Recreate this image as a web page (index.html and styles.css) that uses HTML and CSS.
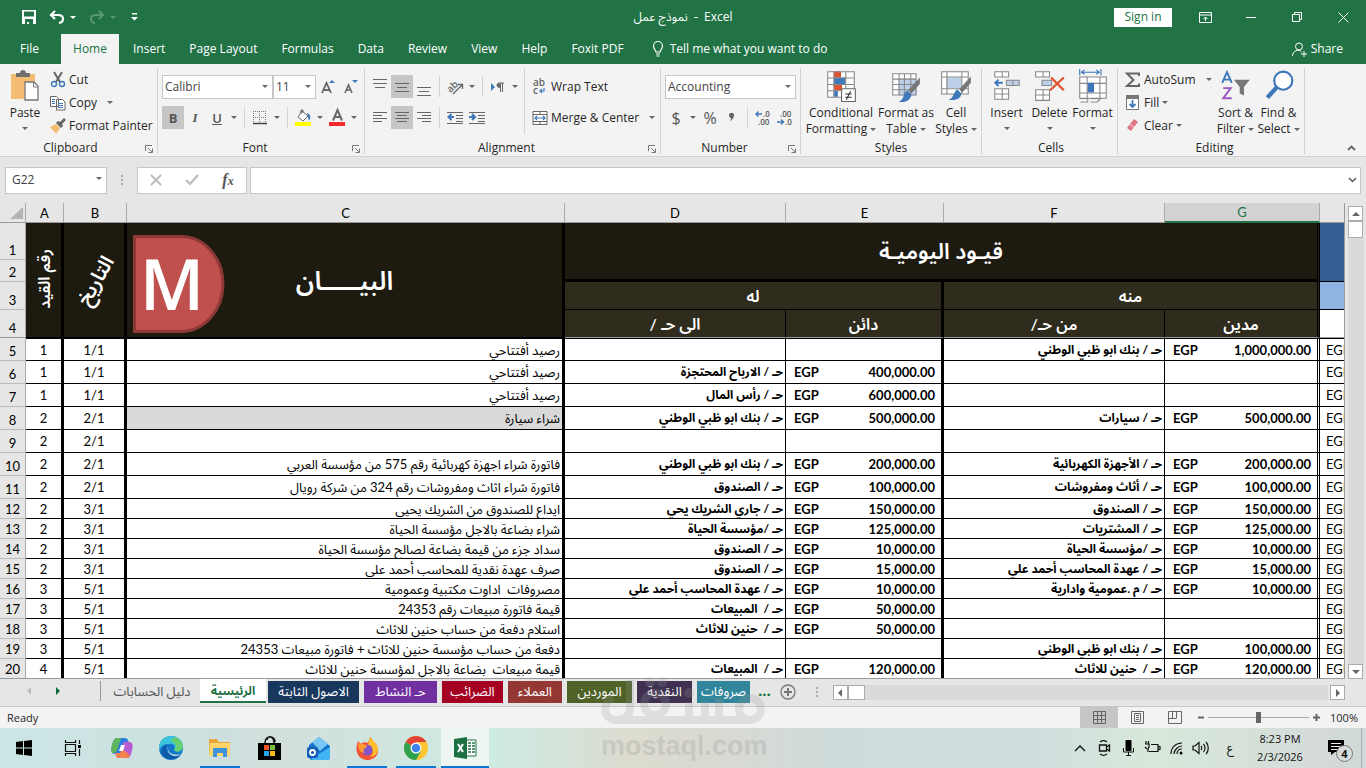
FILE: index.html
```html
<!DOCTYPE html>
<html lang="en">
<head>
<meta charset="utf-8">
<title>نموذج عمل - Excel</title>
<meta name="viewport" content="width=device-width, initial-scale=1">
<link rel="stylesheet" href="styles.css">
</head>
<body>
<header class="titlebar">
  <div class="quick">
    <button class="qbtn" aria-label="Save"><svg width="14" height="14" viewBox="0 0 14 14"><path d="M0 0h14v14H0zM2 1.500v5h10v-5zM3 9v5h2v-2h2v2h4V9z" fill="#fff" fill-rule="evenodd"/></svg></button>
    <button class="qbtn" aria-label="Undo"><svg width="16" height="14" viewBox="0 0 16 14"><path d="M1 5h8c7 0 6 7 1 8M6 1L2 5l4 4" fill="none" stroke="#fff" stroke-width="2.200"/></svg><span class="caret light"></span></button>
    <button class="qbtn dim" aria-label="Redo"><svg width="16" height="14" viewBox="0 0 16 14"><path d="M15 5H7C0 5 1 12 6 13M10 1l4 4-4 4" fill="none" stroke="#fff" stroke-width="2"/></svg><span class="caret light"></span></button>
    <button class="qbtn" aria-label="Customize toolbar"><svg width="7" height="8" viewBox="0 0 7 8"><path d="M1 0h5v1.500H1zM0 4h7L3.500 7.500z" fill="#fff"/></svg></button>
  </div>
  <h1 class="title"><span dir="rtl">نموذج عمل</span>&nbsp; - &nbsp;Excel</h1>
  <div class="winctl">
    <button class="signin">Sign in</button>
    <button class="wbtn" aria-label="Ribbon options"><svg width="13" height="11" viewBox="0 0 13 11"><path d="M.5.5h12v10H.5zM.5 3h12M6.500 9V5M4.500 7l2-2 2 2" fill="none" stroke="#fff"/></svg></button>
    <button class="wbtn" aria-label="Minimize"><svg width="11" height="11"><path d="M0 5.500h10" stroke="#fff"/></svg></button>
    <button class="wbtn" aria-label="Restore"><svg width="11" height="11"><path d="M.5 2.500h7v7h-7zM2.500 2.500v-2h7v7h-2" fill="none" stroke="#fff"/></svg></button>
    <button class="wbtn" aria-label="Close"><svg width="11" height="11"><path d="M.5.5l10 10M10.500.5l-10 10" stroke="#fff"/></svg></button>
  </div>
</header>
<nav class="tabs">
  <a href="#" class="file">File</a><a href="#" class="on">Home</a><a href="#">Insert</a><a href="#">Page Layout</a><a href="#">Formulas</a><a href="#">Data</a><a href="#">Review</a><a href="#">View</a><a href="#">Help</a><a href="#">Foxit PDF</a>
  <a href="#" class="tell"><svg width="12" height="16" viewBox="0 0 12 16"><path d="M4 11C4 9 1.500 8 1.500 5a4.500 4.500 0 0 1 9 0c0 3-2.500 4-2.500 6zM4 13h4M4.500 15h3" fill="none" stroke="#fff" stroke-width="1.200"/></svg>Tell me what you want to do</a>
  <a href="#" class="share"><svg width="15" height="15" viewBox="0 0 15 15"><circle cx="7" cy="4.500" r="3.500" fill="none" stroke="#fff"/><path d="M.5 14c0-6 7-7 9-4M9 12h6M12 9v6" fill="none" stroke="#fff"/></svg>Share</a>
</nav>
<section class="ribbon">
  <div class="group g-clip">
    <div class="body">
      <button class="big paste"><svg width="30" height="34" viewBox="0 0 30 32"><path d="M1 4h24v25H1z" fill="#f3bd74"/><path d="M6 7h14V3h-4c0-4-6-4-6 0H6z" fill="#707070"/><path d="M15 12h9l4 4v14H15z" fill="#fff" stroke="#777" stroke-width="1.300"/><path d="M23.500 12v5H28" fill="none" stroke="#777"/></svg><span>Paste</span><i class="caret"></i></button>
      <div class="stack">
        <button class="item"><svg width="16" height="16" viewBox="0 0 16 16"><path d="M4 0l6 10M12 0L6 10" stroke="#666" stroke-width="2"/><circle cx="4" cy="12" r="2.500" fill="none" stroke="#3e78ba" stroke-width="1.400"/><circle cx="12" cy="12" r="2.500" fill="none" stroke="#3e78ba" stroke-width="1.400"/></svg>Cut</button>
        <button class="item"><svg width="16" height="16" viewBox="0 0 16 16"><path d="M.5 1.500h6l2 2v8h-8zM6.500 4.500h6l2.500 2.500v8H6.500z" fill="#fff" stroke="#666"/><path d="M2 4.500h3M2 6.500h3M2 8.500h3M8 8.500h5M8 10.500h5M8 12.500h5" stroke="#3e78ba"/></svg>Copy<i class="caret far"></i></button>
        <button class="item"><svg width="16" height="16" viewBox="0 0 16 16"><path d="M0 9l6-3 4 4-4 6C4 13 2 12 0 9z" fill="#f3bd74"/><path d="M6 5l5 5 2-2-1-2 4-4-2-2-4 4-2-1z" fill="#666"/></svg>Format Painter</button>
      </div>
    </div>
    <div class="cap"><span>Clipboard</span><svg class="launch" width="8" height="8"><path d="M.5 6V.5H7M3 3l4 4M7.500 3.500v4h-4" fill="none" stroke="#777"/></svg></div>
  </div>
  <div class="group g-font">
    <div class="body rows">
      <div class="row">
        <label class="sel name"><select aria-label="Font"><option>Calibri</option></select></label><label class="sel size"><select aria-label="Font size"><option>11</option></select></label>
        <button class="ib wide" aria-label="Increase font size"><svg width="14" height="16" viewBox="0 0 14 16"><path d="M1 14L5.500 4 10 14M2.500 11h6" fill="none" stroke="#666" stroke-width="1.800"/><path d="M8 4h6L11 1z" fill="#3e78ba"/></svg></button>
        <button class="ib" aria-label="Decrease font size"><svg width="14" height="16" viewBox="0 0 14 16"><path d="M1 14l3.500-8L8 14M2 11h5" fill="none" stroke="#666" stroke-width="1.600"/><path d="M8 1h6l-3 3z" fill="#3e78ba"/></svg></button>
      </div>
      <div class="row">
        <button class="ib on bold">B</button><button class="ib ital">I</button><button class="ib under">U</button><i class="caret b"></i><i class="vs"></i>
        <button class="ib" aria-label="Borders"><svg width="14" height="14"><path d="M.5 0v13M6.500 0v13M12.500 0v13M0 .5h13M0 6.500h13" stroke="#777" stroke-dasharray="1 1"/><path d="M0 12.500h14" stroke="#444" stroke-width="1.500"/></svg></button><i class="caret b"></i><i class="vs"></i>
        <button class="ib" aria-label="Fill color"><svg width="17" height="17" viewBox="0 0 17 17"><path d="M7 2l6 5-5 5-5-4zM6 5V1h2v3" fill="#fff" stroke="#666"/><path d="M12 4c4 1 4 5 2 8-1-3-1-5-2-8" fill="#3e78ba"/><path d="M0 13h16v4H0z" fill="#ff0"/></svg></button><i class="caret b"></i>
        <button class="ib" aria-label="Font color"><svg width="17" height="17" viewBox="0 0 17 17"><path d="M4 11.500L8.500 1 13 11.500M5.500 8h6" fill="none" stroke="#666" stroke-width="2"/><path d="M0 13h16v4H0z" fill="#f2282c"/></svg></button><i class="caret b"></i>
      </div>
    </div>
    <div class="cap"><span>Font</span><svg class="launch" width="8" height="8"><path d="M.5 6V.5H7M3 3l4 4M7.500 3.500v4h-4" fill="none" stroke="#777"/></svg></div>
  </div>
  <div class="group g-align">
    <div class="body">
      <div class="rows aligns">
        <div class="row">
          <button class="ib" aria-label="Top align"><svg width="14" height="18"><path d="M0 5.500h14M2 9.500h10M0 1.500h14" stroke="#666"/></svg></button><button class="ib on" aria-label="Middle align"><svg width="14" height="18"><path d="M0 5.500h14M2 9.500h10M0 13.500h14" stroke="#666"/></svg></button><button class="ib" aria-label="Bottom align"><svg width="14" height="18"><path d="M0 9.500h14M2 13.500h10M0 17.500h14" stroke="#666"/></svg></button><i class="vs"></i>
          <button class="ib" aria-label="Orientation"><svg width="17" height="16" viewBox="0 0 17 16"><text class="ori" x="0" y="10" transform="rotate(-45 7 8)">ab</text><path d="M6 15L15 6M11 5.500h4.500V10" fill="none" stroke="#666" stroke-width="1.300"/></svg></button><i class="caret b"></i><i class="vs"></i>
          <button class="ib" aria-label="Text direction"><svg width="14" height="10"><path d="M0 1l4 4-4 4z" fill="#3e78ba"/><path d="M10 5.500C5 6 5 1 8 1h5M9.500 1v9M11.500 1v9" fill="none" stroke="#666"/><circle cx="8" cy="3.500" r="2" fill="#666"/></svg></button><i class="caret b"></i>
        </div>
        <div class="row">
          <button class="ib" aria-label="Align left"><svg width="14" height="14"><path d="M0 1.500h14M0 4.500h9M0 7.500h14M0 10.500h9" stroke="#666"/></svg></button><button class="ib on" aria-label="Center"><svg width="14" height="14"><path d="M0 1.500h14M2 4.500h10M0 7.500h14M2 10.500h10" stroke="#666"/></svg></button><button class="ib" aria-label="Align right"><svg width="14" height="14"><path d="M0 1.500h14M5 4.500h9M0 7.500h14M5 10.500h9" stroke="#666"/></svg></button><i class="vs"></i>
          <button class="ib" aria-label="Decrease indent"><svg width="16" height="14"><path d="M0 1.500h16M9 4.500h7M9 7.500h7M0 12.500h16M9 10.500h7" stroke="#666"/><path d="M7 6H2M4.500 3L1.500 6l3 3" fill="none" stroke="#3e78ba" stroke-width="2"/></svg></button><button class="ib" aria-label="Increase indent"><svg width="16" height="14"><path d="M0 1.500h16M9 4.500h7M9 7.500h7M0 12.500h16M9 10.500h7" stroke="#666"/><path d="M0 6h5M3 3l3 3-3 3" fill="none" stroke="#3e78ba" stroke-width="2"/></svg></button>
        </div>
      </div>
      <div class="rows wraps">
        <div class="row"><button class="item"><svg width="16" height="16" viewBox="0 0 16 16"><text class="abc" x="1" y="7">ab</text><text class="abc" x="1" y="15">c</text><path d="M12 9v3H8M10 10l-2 2 2 2" fill="none" stroke="#3e78ba" stroke-width="1.200"/></svg>Wrap Text</button></div>
        <div class="row"><button class="item"><svg width="16" height="16"><path d="M1 1.500h14v13H1zM1 4.500h14M1 11.500h14M8 1v3M8 12v3" fill="#fff" stroke="#666"/><path d="M3 8h10M5 6L3 8l2 2M11 6l2 2-2 2" fill="none" stroke="#3e78ba" stroke-width="1.200"/></svg>Merge &amp; Center<i class="caret far"></i></button></div>
      </div>
    </div>
    <div class="cap"><span>Alignment</span><svg class="launch" width="8" height="8"><path d="M.5 6V.5H7M3 3l4 4M7.500 3.500v4h-4" fill="none" stroke="#777"/></svg></div>
  </div>
  <div class="group g-num">
    <div class="body rows">
      <div class="row"><label class="sel fmt"><select aria-label="Number format"><option>Accounting</option></select></label></div>
      <div class="row"><button class="ib sym">$</button><i class="caret b"></i><button class="ib sym">%</button><button class="ib" aria-label="Comma style"><svg width="6" height="9"><path d="M0 2c0-3 6-3 5 1-1 3-2 4-4 5 1-2 1-2 1-3C1 5 0 4 0 2" fill="#666"/></svg></button><i class="vs"></i>
      <button class="ib" aria-label="Increase decimal"><svg width="16" height="16" viewBox="0 0 16 16"><text class="dec" x="8" y="7">.0</text><text class="dec" x="3" y="15">.00</text><path d="M7 4H1M3.500 1.500L1 4l2.500 2.500" fill="none" stroke="#3e78ba" stroke-width="1.400"/></svg></button><button class="ib" aria-label="Decrease decimal"><svg width="16" height="16" viewBox="0 0 16 16"><text class="dec" x="3" y="7">.00</text><text class="dec" x="8" y="15">.0</text><path d="M0 12h6M4 9.500L6.500 12 4 14.500" fill="none" stroke="#3e78ba" stroke-width="1.400"/></svg></button></div>
    </div>
    <div class="cap"><span>Number</span><svg class="launch" width="8" height="8"><path d="M.5 6V.5H7M3 3l4 4M7.500 3.500v4h-4" fill="none" stroke="#777"/></svg></div>
  </div>
  <div class="group g-styles">
    <div class="body">
      <button class="big cf"><svg width="30" height="34" viewBox="0 0 28 32"><path d="M1 2h25v24H1z" fill="#fff"/><path d="M7 2h7v6H7zM7 14h8v6H7z" fill="#e0532f"/><path d="M7 8h11v6H7zM7 20h4v6H7z" fill="#3e78ba"/><path d="M1.500 2.500h25v24h-25zM7.500 2v24M18.500 2v24M1 8.500h25M1 14.500h25M1 20.500h25" fill="none" stroke="#888"/><path d="M14.500 18.500h13v12h-13z" fill="#fff" stroke="#666"/><path d="M18 23.500h6M18 26.500h6M23 21l-4 8" stroke="#333"/></svg><span>Conditional</span><span>Formatting <i class="caret"></i></span></button>
      <button class="big w50"><svg width="30" height="34" viewBox="0 0 28 32"><path d="M1.500 4.500h22v20h-22z" fill="#fff"/><path d="M7 9h17v16H7z" fill="#bcd0ea"/><path d="M1.500 4.500h22v20h-22zM7.500 4v20M12.500 4v20M18.500 4v20M1 9.500h22M1 14.500h22M1 19.500h22" fill="none" stroke="#888"/><path d="M27 8v6l-8 9-3-3z" fill="#777"/><path d="M15 20l4 4c0 4-4 8-12 7 5-2 4-7 8-11" fill="#3e78ba"/></svg><span>Format as</span><span>Table <i class="caret"></i></span></button>
      <button class="big w50"><svg width="30" height="34" viewBox="0 0 28 32"><path d="M.5 2.500h25v21H.500z" fill="#fff"/><path d="M5 8h14v10H5z" fill="#bcd0ea"/><path d="M.5 2.500h25v21H.500zM5.500 2v21M19.500 2v21M0 7.500h25M0 18.500h25" fill="none" stroke="#888"/><path d="M28 7v6l-8 9-3-3z" fill="#777"/><path d="M15 19l4 4c0 4-4 7-12 6 5-2 4-6 8-10" fill="#3e78ba"/></svg><span>Cell</span><span>Styles <i class="caret"></i></span></button>
    </div>
    <div class="cap"><span>Styles</span></div>
  </div>
  <div class="group g-cells">
    <div class="body">
      <button class="big w42"><svg width="28" height="34" viewBox="0 0 26 32"><path d="M1.500 2.500h13v5h-13zM8.500 2v5M1.500 18.500h13v10h-13zM8.500 18v10M1 23.500h14" fill="#fff" stroke="#888"/><path d="M12.500 10.500h12v5h-12zM18.500 10v5" fill="#bcd0ea" stroke="#888"/><path d="M9 13H3M5 10l-3 3 3 3" fill="none" stroke="#3e78ba" stroke-width="1.800"/></svg><span>Insert</span><i class="caret"></i></button>
      <button class="big w42"><svg width="32" height="34" viewBox="0 0 30 32"><path d="M1.500 2.500h13v5h-13zM8.500 2v5M1.500 19.500h13v10h-13zM8.500 19v10M1 24.500h14" fill="#fff" stroke="#888"/><path d="M7.500 10.500h9v5h-9z" fill="#bcd0ea" stroke="#888"/><path d="M16 8l12 12M28 8L15 20" stroke="#e0532f" stroke-width="2.200"/></svg><span>Delete</span><i class="caret"></i></button>
      <button class="big w42"><svg width="30" height="34" viewBox="0 0 28 32"><path d="M1.500 7.500h25v20h-25zM8.500 7v20M20.500 7v20M1 13.500h25M1 22.500h25M2 28h7v3H2M12 28h9l-3 3h-6" fill="#fff" stroke="#888"/><path d="M9 13h6v9H9z" fill="#3e78ba"/><path d="M1.500 0v6M21.500 0v6M3 3h17M6 1L3 3l3 2M17 1l3 2-3 2" fill="none" stroke="#3e78ba"/></svg><span>Format</span><i class="caret"></i></button>
    </div>
    <div class="cap"><span>Cells</span></div>
  </div>
  <div class="group g-edit">
    <div class="body">
      <div class="stack">
        <button class="item"><svg width="16" height="16" viewBox="0 0 16 16"><path d="M14 4V1.500H2L8.500 8 2 14h12v-2.500" fill="none" stroke="#666" stroke-width="2"/></svg>AutoSum<i class="caret far"></i></button>
        <button class="item"><svg width="16" height="16" viewBox="0 0 16 16"><path d="M1.500 1.500h12v13h-12z" fill="#fff" stroke="#777"/><path d="M1 0h13v4H1z" fill="#777"/><path d="M7.500 5v7M4.500 9l3 3 3-3" fill="none" stroke="#3e78ba" stroke-width="1.800"/></svg>Fill <i class="caret"></i></button>
        <button class="item"><svg width="16" height="16" viewBox="0 0 16 16"><path d="M9 1l4 3-4 5-4-3zM4.500 6.500l4 3L6 13l-4-3z" fill="#df7484"/></svg>Clear <i class="caret"></i></button>
      </div>
      <button class="big w42"><svg width="32" height="34" viewBox="0 0 30 32"><path d="M2 13L6.500 3 11 13M3.500 10h6" fill="none" stroke="#3e78ba" stroke-width="1.800"/><path d="M3 18h7L3 27.500h8" fill="none" stroke="#9a55c4" stroke-width="1.800"/><path d="M13 10h15l-5.500 7v8l-4-2v-6z" fill="#777"/></svg><span>Sort &amp;</span><span>Filter <i class="caret"></i></span></button>
      <button class="big w42"><svg width="30" height="34" viewBox="0 0 28 32"><circle cx="18" cy="11" r="8.500" fill="#fff" stroke="#3e78ba" stroke-width="2"/><path d="M12 17L3 27" stroke="#3e78ba" stroke-width="4"/></svg><span>Find &amp;</span><span>Select <i class="caret"></i></span></button>
    </div>
    <div class="cap"><span>Editing</span></div>
  </div>
  <button class="collapse" aria-label="Collapse ribbon"><svg width="9" height="6"><path d="M1 5l3.500-3.500L8 5" fill="none" stroke="#666" stroke-width="1.800"/></svg></button>
</section>
<section class="formula">
  <label class="sel cellname"><select aria-label="Name box"><option>G22</option></select></label>
  <span class="dots"></span>
  <div class="fbtns">
    <button aria-label="Cancel"><svg width="12" height="12"><path d="M1 1l10 10M11 1L1 11" stroke="#bbb" stroke-width="1.800"/></svg></button>
    <button aria-label="Enter"><svg width="14" height="12"><path d="M1 6l4 4 8-9" fill="none" stroke="#bbb" stroke-width="2.200"/></svg></button>
    <button class="fx" aria-label="Insert function">f<small>x</small></button>
  </div>
  <label class="fin"><input type="text" aria-label="Formula bar"><svg width="9" height="6"><path d="M1 1l3.500 3.500L8 1" fill="none" stroke="#555" stroke-width="1.500"/></svg></label>
</section>
<main class="sheet">
  <div class="gridwrap">
  <table class="grid">
    <colgroup><col class="c0"><col class="ca"><col class="cb"><col class="cc"><col class="cd"><col class="ce"><col class="cd"><col class="cg"><col class="ch"></colgroup>
    <thead><tr><th class="corner"><svg width="13" height="12"><path d="M13 0v12H0z" fill="#b3b3b3"/></svg></th><th>A</th><th>B</th><th>C</th><th>D</th><th>E</th><th>F</th><th class="cur">G</th><th></th></tr></thead>
    <tbody>
    <tr class="r1"><th>1</th><td class="dk k" rowspan="4"><span class="vert">رقم القيد</span></td><td class="dk k" rowspan="4"><span class="slant">التاريخ</span></td><td class="dk k bayan" rowspan="4"><svg class="logo" width="92" height="98" viewBox="0 0 92 98"><path d="M1.500 1.500H48a42 47.500 0 0 1 0 95H1.500z" fill="#c0504d" stroke="#8c3836" stroke-width="3"/><text x="39" y="75" text-anchor="middle">M</text></svg><span>البيـــــان</span></td><td class="dk t0 dbl" colspan="4" rowspan="2">قيـود اليوميـة</td><td class="blue" rowspan="2"></td></tr>
    <tr class="r2"><th>2</th></tr>
    <tr class="r3"><th>3</th><td class="md k" colspan="2">له</td><td class="md dbl" colspan="2">منه</td><td class="sky"></td></tr>
    <tr class="r3 r4"><th>4</th><td class="md">الى حـ /</td><td class="md k">دائن</td><td class="md">من حـ/</td><td class="md dbl">مدين</td><td></td></tr>
    <tr class="h first"><th>5</th><td>1</td><td>1/1</td><td>رصيد أفتتاحي</td><td></td><td></td><td>حـ / بنك ابو ظبي الوطني</td><td><div class="m"><span>EGP</span><span>1,000,000.00</span></div></td><td>EGP</td></tr>
    <tr class="h"><th>6</th><td>1</td><td>1/1</td><td>رصيد أفتتاحي</td><td>حـ / الارباح المحتجزة</td><td><div class="m"><span>EGP</span><span>400,000.00</span></div></td><td></td><td></td><td>EGP</td></tr>
    <tr class="h"><th>7</th><td>1</td><td>1/1</td><td>رصيد أفتتاحي</td><td>حـ / رأس المال</td><td><div class="m"><span>EGP</span><span>600,000.00</span></div></td><td></td><td></td><td>EGP</td></tr>
    <tr class="h"><th>8</th><td>2</td><td>2/1</td><td class="gray">شراء سيارة</td><td>حـ / بنك ابو ظبي الوطني</td><td><div class="m"><span>EGP</span><span>500,000.00</span></div></td><td>حـ / سيارات</td><td><div class="m"><span>EGP</span><span>500,000.00</span></div></td><td>EGP</td></tr>
    <tr class="h"><th>9</th><td>2</td><td>2/1</td><td></td><td></td><td></td><td></td><td></td><td>EGP</td></tr>
    <tr class="h"><th>10</th><td>2</td><td>2/1</td><td>فاتورة شراء اجهزة كهربائية رقم 575 من مؤسسة العربي</td><td>حـ / بنك ابو ظبي الوطني</td><td><div class="m"><span>EGP</span><span>200,000.00</span></div></td><td>حـ / الأجهزة الكهربائية</td><td><div class="m"><span>EGP</span><span>200,000.00</span></div></td><td>EGP</td></tr>
    <tr class="h"><th>11</th><td>2</td><td>2/1</td><td>فاتورة شراء اثاث ومفروشات رقم 324 من شركة رويال</td><td>حـ / الصندوق</td><td><div class="m"><span>EGP</span><span>100,000.00</span></div></td><td>حـ / أثاث ومفروشات</td><td><div class="m"><span>EGP</span><span>100,000.00</span></div></td><td>EGP</td></tr>
    <tr><th>12</th><td>2</td><td>3/1</td><td>ايداع للصندوق من الشريك يحيى</td><td>حـ / جاري الشريك يحي</td><td><div class="m"><span>EGP</span><span>150,000.00</span></div></td><td>حـ / الصندوق</td><td><div class="m"><span>EGP</span><span>150,000.00</span></div></td><td>EGP</td></tr>
    <tr><th>13</th><td>2</td><td>3/1</td><td>شراء بضاعة بالاجل مؤسسة الحياة</td><td>حـ /مؤسسة الحياة</td><td><div class="m"><span>EGP</span><span>125,000.00</span></div></td><td>حـ / المشتريات</td><td><div class="m"><span>EGP</span><span>125,000.00</span></div></td><td>EGP</td></tr>
    <tr><th>14</th><td>2</td><td>3/1</td><td>سداد جزء من قيمة بضاعة لصالح مؤسسة الحياة</td><td>حـ / الصندوق</td><td><div class="m"><span>EGP</span><span>10,000.00</span></div></td><td>حـ /مؤسسة الحياة</td><td><div class="m"><span>EGP</span><span>10,000.00</span></div></td><td>EGP</td></tr>
    <tr><th>15</th><td>2</td><td>3/1</td><td>صرف عهدة نقدية للمحاسب أحمد على</td><td>حـ / الصندوق</td><td><div class="m"><span>EGP</span><span>15,000.00</span></div></td><td>حـ / عهدة المحاسب أحمد علي</td><td><div class="m"><span>EGP</span><span>15,000.00</span></div></td><td>EGP</td></tr>
    <tr><th>16</th><td>3</td><td>5/1</td><td>مصروفات&nbsp; اداوت مكتبية وعمومية</td><td>حـ / عهدة المحاسب أحمد علي</td><td><div class="m"><span>EGP</span><span>10,000.00</span></div></td><td>حـ / م .عمومية وادارية</td><td><div class="m"><span>EGP</span><span>10,000.00</span></div></td><td>EGP</td></tr>
    <tr><th>17</th><td>3</td><td>5/1</td><td>قيمة فاتورة مبيعات رقم 24353</td><td>حـ /&nbsp; المبيعات</td><td><div class="m"><span>EGP</span><span>50,000.00</span></div></td><td></td><td></td><td>EGP</td></tr>
    <tr><th>18</th><td>3</td><td>5/1</td><td>استلام دفعة من حساب حنين للاثاث</td><td>حـ /&nbsp; حنين للاثاث</td><td><div class="m"><span>EGP</span><span>50,000.00</span></div></td><td></td><td></td><td>EGP</td></tr>
    <tr><th>19</th><td>3</td><td>5/1</td><td>دفعة من حساب مؤسسة حنين للاثاث + فاتورة مبيعات 24353</td><td></td><td></td><td>حـ / بنك ابو ظبي الوطني</td><td><div class="m"><span>EGP</span><span>100,000.00</span></div></td><td>EGP</td></tr>
    <tr><th>20</th><td>4</td><td>5/1</td><td>قيمة مبيعات&nbsp; بضاعة بالاجل لمؤسسة حنين للاثاث</td><td>حـ /&nbsp; المبيعات</td><td><div class="m"><span>EGP</span><span>120,000.00</span></div></td><td>حـ /&nbsp; حنين للاثاث</td><td><div class="m"><span>EGP</span><span>120,000.00</span></div></td><td>EGP</td></tr>
    </tbody>
  </table>
  </div>
  <div class="vscroll"><button aria-label="Scroll up"><i class="tri up"></i></button><span class="thumb"></span><span class="track"></span><button aria-label="Scroll down"><i class="tri down"></i></button></div>
</main>
<nav class="sheets">
  <div class="arrows"><button aria-label="Previous sheets"><i class="tri prev pale"></i></button><button aria-label="Next sheets"><i class="tri next green"></i></button></div>
  <a href="#" class="st plain">دليل الحسابات</a><a href="#" class="st active">الرئيسية</a><a href="#" class="st navy">الاصول الثابتة</a><a href="#" class="st purple">حـ النشاط</a><a href="#" class="st red">الضرائب</a><a href="#" class="st brick">العملاء</a><a href="#" class="st olive">الموردين</a><a href="#" class="st plum">النقدية</a><a href="#" class="st teal">صروفات</a>
  <span class="more">...</span>
  <button class="add" aria-label="New sheet"><svg width="16" height="16"><circle cx="8" cy="8" r="7" fill="none" stroke="#777" stroke-width="1.300"/><path d="M4 8h8M8 4v8" stroke="#777" stroke-width="2"/></svg></button>
  <span class="dots"></span>
  <div class="hscroll"><button aria-label="Scroll left"><i class="tri prev"></i></button><span class="thumb"></span><span class="track"></span><button aria-label="Scroll right"><i class="tri next"></i></button></div>
</nav>
<footer class="status">
  <span class="ready">Ready</span>
  <button class="view on" aria-label="Normal view"><svg width="13" height="13"><path d="M.5.5h12v12H.5zM4.500 0v13M8.500 0v13M0 4.500h13M0 8.500h13" fill="none" stroke="#666"/></svg></button>
  <button class="view" aria-label="Page layout view"><svg width="13" height="13"><path d="M.5.5h12v12H.5zM3.500 2.500h6v8h-6zM5 4.500h3M5 6.500h3M5 8.500h3" fill="none" stroke="#666"/></svg></button>
  <button class="view" aria-label="Page break view"><svg width="14" height="13"><path d="M.5.5h13v12H.500zM4.500 0v7M8.500 0v7M.5 7.500h8" fill="none" stroke="#666"/></svg></button>
  <button class="zb" aria-label="Zoom out"><svg width="7" height="7"><path d="M0 3.500h6" stroke="#666" stroke-width="2"/></svg></button><input class="zoom" type="range" aria-label="Zoom" min="0" max="200" value="100"><button class="zb" aria-label="Zoom in"><svg width="7" height="7"><path d="M0 3.500h7M3.500 0v7" stroke="#666" stroke-width="2"/></svg></button>
  <span class="pct">100%</span>
</footer>
<div class="taskbar">
  <button class="app" aria-label="Start"><svg width="16" height="16"><path d="M0 2l7-1v6.500H0zM8 1l8-1v7.500H8zM0 8.500h7V15l-7-1zM8 8.500h8V16l-8-1z"/></svg></button>
  <button class="app" aria-label="Task view"><svg width="16" height="16"><path d="M.5 0v2.500h10V0M.5 4.500h10v7H.500zM.500 16v-2.500h10V16M14.500 0v4M14.500 9v7" fill="none" stroke="#111" stroke-width="1.200"/><path d="M13 5h3v3h-3z"/></svg></button>
  <button class="app" aria-label="Copilot"><svg width="24" height="24" viewBox="0 0 24 24"><path d="M7 2h8c3 0 3 3 4 5h-5l-3 9c-1 3-3 2-6 2-5 0-4-6-2-12 1-3 2-4 4-4" fill="#2b7de0"/><path d="M3 6c1-3 2-4 4-4h4L8 12c-1 4-3 5-6 5C0 14 2 9 3 6" fill="#5fb45e"/><path d="M17 22H9c-3 0-3-3-4-5h5l3-9c1-3 3-2 6-2 5 0 4 6 2 12-1 3-2 4-4 4" fill="#b75bd2"/><path d="M17 22H9c-3 0-3-3-4-5h5l2-4 8 6c-1 2-2 3-3 3" fill="#f2824a"/><path d="M11 9h4l-2 6H9z" fill="#fff"/></svg></button>
  <button class="app" aria-label="Edge"><svg width="24" height="24" viewBox="0 0 24 24"><circle cx="12" cy="12" r="12" fill="#1477c9"/><path d="M0 11C1-3 22-4 24 10c0 6-7 7-9 4 2-3 0-7-5-6C5 8 2 10 0 14z" fill="#3cc5dc"/><path d="M16 1c8 3 10 11 5 14-3 1-6 0-6-1 4-4 1-8-4-9z" fill="#68cf72"/><path d="M8 9c-3 6 2 13 14 9-4 6-13 7-18 2C1 15 4 9 8 9" fill="#0d5ba8"/><path d="M9 10c-1 8 6 10 13 8-7 5-15 0-13-8" fill="#cee8e4"/></svg></button>
  <button class="app run" aria-label="File Explorer"><svg width="22" height="20" viewBox="0 0 22 20"><path d="M0 1h8l2 3h11v14H0z" fill="#e9a63b"/><path d="M1 5h20v13H0z" fill="#ffd56b"/><path d="M4 10h14v9h-4v-4H8v4H4z" fill="#3f93dc"/></svg></button>
  <button class="app" aria-label="Store"><svg width="23" height="24" viewBox="0 0 23 24"><path d="M0 7h23v17H0z"/><path d="M7 7c0-8 9-8 9 0M9 4c0-5 8-4 8 2" fill="none" stroke="#111" stroke-width="1.500"/><path d="M6 9h5v5H6z" fill="#f05125"/><path d="M12 9h5v5h-5z" fill="#7fba3b"/><path d="M6 15h5v5H6z" fill="#2ba3ea"/><path d="M12 15h5v5h-5z" fill="#fdb913"/></svg></button>
  <button class="app" aria-label="Outlook"><svg width="23" height="23" viewBox="0 0 23 23"><path d="M2 8L12 0l11 9v11c0 2-1 3-3 3H5c-2 0-3-2-3-4z" fill="#1673cd"/><path d="M5 5l7-5 9 7-8 7z" fill="#78c8f5"/><path d="M4 22l19-12v10c0 2-1 3-3 3H6z" fill="#42b3f3"/><rect y="10" width="11" height="11" rx="2" fill="#1260b5"/><circle cx="5.500" cy="15.500" r="2.500" fill="none" stroke="#fff" stroke-width="1.800"/></svg></button>
  <button class="app run" aria-label="Firefox"><svg width="23" height="23" viewBox="0 0 23 23"><path d="M2 4l3 3c2-2 5-2 7-1L14 0c2 2 3 4 5 6 7 8 1 17-7 17C2 23-2 14 2 4" fill="#f35436"/><path d="M14 0c2 3 8 7 8 12 0 4-3 8-8 8 4-3 4-9-2-12z" fill="#ffbd2e"/><circle cx="11" cy="13" r="5.500" fill="#8453c9"/><path d="M2 6c3 1 5 1 9 2l-1 3c-3 0-3 3-1 5-5 0-7-4-7-10" fill="#ff9833"/></svg></button>
  <button class="app run" aria-label="Chrome"><svg width="24" height="24" viewBox="0 0 24 24"><circle cx="12" cy="12" r="12" fill="#fbc630"/><path d="M12 12L1.600 6A12 12 0 0 1 22.400 6H12z" fill="#e24335"/><path d="M12 12L1.600 6A12 12 0 0 0 12 24l5-9z" fill="#2fa14f"/><circle cx="12" cy="12" r="5.500" fill="#fff"/><circle cx="12" cy="12" r="4.300" fill="#3f82ec"/></svg></button>
  <button class="app run cur" aria-label="Excel"><svg width="23" height="22" viewBox="0 0 23 22"><path d="M11 3h11v16H11z" fill="#fff" stroke="#217346"/><path d="M14 6h3M18 6h3M14 9h3M18 9h3M14 12h3M18 12h3M14 15h3M18 15h3" stroke="#217346" stroke-width="1.600"/><path d="M0 2l13-2v22L0 20z" fill="#1c7044"/><path d="M4 7l5 8M9 7l-5 8" stroke="#fff" stroke-width="2"/></svg></button>
  <div class="tray">
    <button aria-label="Hidden icons"><svg width="12" height="8"><path d="M1 7l5-5 5 5" fill="none" stroke="#111" stroke-width="1.400"/></svg></button>
    <button aria-label="Meet now"><svg width="13" height="16"><path d="M1.500 5h7v6h-7zM8.500 7l3-2v6l-3-2M2 2c2-1.500 5-1.500 7 0M2 14c2 1.500 5 1.500 7 0" fill="none" stroke="#111" stroke-width="1.300"/></svg></button>
    <button aria-label="Microphone"><svg width="11" height="16"><rect x="2.500" width="6" height="11" rx="1"/><path d="M.5 8v4h10V8M5.500 12v3M3 15.500h5" fill="none" stroke="#111"/></svg></button>
    <button aria-label="Battery"><svg width="17" height="14"><path d="M7 3.500h7v7H5M14.500 5.500h1.500v3h-1.500M1 3h4v3l-1 2v3M2 3V0M4.500 3V0M1 6l2 2" fill="none" stroke="#111" stroke-width="1.200"/></svg></button>
    <button aria-label="Wi-Fi"><svg width="13" height="13"><path d="M1 12C1 5 6 1 12 1M4 12c0-4 4-8 8-8M7 12c0-3 2-5 5-5" fill="none" stroke="#111" stroke-width="1.200"/><circle cx="11" cy="11" r="1.500"/></svg></button>
    <button aria-label="Volume"><svg width="17" height="14"><path d="M1 5h2l4-3.500v11L3 9H1zM9 5c1 1 1 3 0 4M11.500 3c2 2 2 6 0 8M14 1c3 3 3 9 0 12" fill="none" stroke="#111" stroke-width="1.200"/></svg></button>
    <button class="lang">ع</button>
    <div class="clock"><span>8:23 PM</span><span>2/3/2026</span></div>
    <button class="note" aria-label="Notifications"><svg width="18" height="16"><path d="M0 0h16v12H7l-4 3v-3H0z"/><path d="M3 3.500h10M3 6.500h10M3 9.500h6" stroke="#eee"/></svg><b>4</b></button>
  </div>
  <div class="mark"><svg width="164" height="48" viewBox="0 0 164 48"><g fill="none" stroke="#999" stroke-width="8"><path d="M12 22C0 27 2 44 16 44c10 0 13-6 13-14V4M16 44h132M88 42V26M104 42V26M118 42V22"/><circle cx="54" cy="28" r="11"/><circle cx="149" cy="33" r="11"/></g><g fill="#999"><circle cx="49" cy="6" r="5"/><circle cx="61" cy="6" r="5"/><circle cx="88" cy="17" r="5"/></g></svg><span>mostaql.com</span></div>
</div>
</body>
</html>
```
FILE: styles.css
```css
* { box-sizing: border-box; }
body { margin: 0; height: 100vh; display: flex; flex-direction: column; overflow: hidden; background: #e6e6e6; color: #262626; font: 12px/16px "Open Sans", "Noto Sans", "Noto Sans Arabic", "DejaVu Sans", sans-serif; }
button { margin: 0; padding: 0; border: 0; background: none; color: inherit; font: inherit; }
a { color: inherit; text-decoration: none; white-space: nowrap; }
svg { flex: none; display: block; overflow: visible; }
.caret { flex: none; display: inline-block; border: 3px solid transparent; border-top-color: #666; border-bottom: 0; vertical-align: middle; }
.caret.light { border-top-color: #fff; }

.titlebar { flex: none; height: 34px; display: grid; grid-template-columns: 1fr auto 1fr; align-items: center; background: #217346; color: #fff; }
.quick { display: flex; align-items: center; gap: 13px; padding-left: 22px; }
.qbtn { display: flex; align-items: center; gap: 5px; }
.qbtn:last-child { margin-left: 2px; }
.dim { opacity: .25; }
.title { margin: 0; font-size: 12px; font-weight: 400; line-height: 16px; }
.winctl { display: flex; align-items: center; justify-content: flex-end; }
.signin { width: 58px; height: 19px; margin-right: 10px; background: #fff; color: #217346; }
.wbtn { width: 46px; height: 32px; display: flex; align-items: center; justify-content: center; }

.tabs { flex: none; height: 30px; display: flex; background: #217346; color: #fff; line-height: 30px; }
.tabs a { padding: 0 12px; }
.tabs .file { width: 61px; padding-left: 20px; }
.tabs .on { width: 58px; margin-right: 2px; padding: 0; text-align: center; background: #f3f3f3; color: #217346; }
.tabs .tell { display: flex; align-items: center; gap: 6px; margin-left: 4px; font-weight: 500; }
.tabs .share { display: flex; align-items: center; gap: 4px; margin-left: auto; padding-right: 23px; }

.ribbon { flex: none; height: 93px; display: flex; background: #f3f3f3; border-bottom: 1px solid #d0d0d0; padding-top: 4px; }
.group { flex: none; height: 86px; display: flex; flex-direction: column; justify-content: space-between; border-right: 1px solid #d4d4d4; }
.body { display: flex; height: 72px; }
.cap { display: flex; position: relative; justify-content: center; line-height: 16px; padding-right: 16px; height: 12px; align-items: center; }
.launch { position: absolute; right: 4px; top: 3px; }
.g-clip { width: 158px; }
.g-font { width: 207px; padding-left: 4px; }
.g-align { width: 296px; padding-left: 4px; }
.g-num { width: 140px; padding-left: 4px; }
.g-styles { width: 181px; }
.g-cells { width: 136px; padding-left: 3px; }
.g-edit { width: 187px; padding-left: 7px; }
.g-styles .cap, .g-cells .cap, .g-edit .cap { padding: 0; }
.big { flex: none; display: flex; flex-direction: column; align-items: center; white-space: nowrap; padding-top: 1px; }
.big svg { margin-bottom: 2px; }
.big > .caret { margin-top: 6px; }
.paste { width: 50px; }
.cf { width: 80px; }
.w50 { width: 50px; }
.w42 { width: 43px; }
.stack { display: flex; flex-direction: column; }
.item { height: 23px; display: flex; align-items: center; gap: 3px; white-space: nowrap; }
.far { margin-left: 7px; }
.g-edit .stack { width: 89px; flex: none; }
.rows { display: flex; flex-direction: column; gap: 8px; padding-top: 7px; }
.row { display: flex; align-items: center; height: 23px; }
.ib { flex: none; width: 22px; height: 23px; display: flex; align-items: center; justify-content: center; color: #555; font-size: 13px; }
.ib.wide { width: 24px; }
.on { background: #c6c6c6; }
.bold { font-weight: 700; }
.ital { font-style: italic; font-family: "Liberation Serif", serif; font-weight: 700; }
.under { text-decoration: underline; font-weight: 600; }
.sym { font-size: 16px; }
.caret.b { margin: 0 3px; }
.vs { width: 1px; height: 21px; background: #d4d4d4; margin: 0 4px; }
.aligns { width: 156px; border-right: 1px solid #d4d4d4; flex: none; height: 66px; }
.wraps { padding-left: 7px; }
.ori { font-size: 10px; font-weight: 600; fill: #666; }
.abc { font-size: 10px; font-weight: 600; fill: #666; }
.dec { font-size: 8px; font-weight: 600; fill: #555; }
.sel { position: relative; display: block; flex: none; height: 24px; }
.sel::after { content: ""; position: absolute; right: 5px; top: 10px; border: 3px solid transparent; border-top-color: #666; border-bottom: 0; }
.sel select { width: 100%; height: 100%; appearance: none; border: 1px solid #c6c6c6; border-radius: 0; background: #fff; color: #444; font: inherit; padding: 0 2px; }
.name { width: 111px; }
.size { width: 43px; }
.fmt { width: 131px; }
.collapse { margin: 72px 10px 0 auto; }

.formula { flex: none; height: 46px; display: flex; align-items: center; padding: 0 5px; }
.cellname { width: 102px; height: 27px; }
.cellname select { padding-left: 6px; }
.dots { width: 2px; height: 11px; margin: 0 14px; background: repeating-linear-gradient(#aaa 0 2px, transparent 2px 4px); }
.fbtns { display: flex; width: 110px; height: 27px; border: 1px solid #c6c6c6; background: #fff; }
.fbtns button { flex: 1; display: flex; align-items: center; justify-content: center; }
.fbtns .fx { font: italic 700 16px "Liberation Serif", serif; color: #555; }
.fx small { font-size: 12px; padding-top: 3px; }
.fin { flex: 1; display: flex; align-items: center; height: 27px; margin-left: 3px; padding-right: 3px; background: #fff; border: 1px solid #c6c6c6; }
.fin input { flex: 1; border: 0; outline: 0; height: 24px; }

.sheet { flex: 1; min-height: 0; display: flex; }
.gridwrap { flex: 1; min-width: 0; overflow: hidden; border-right: 1px solid #999; border-bottom: 1px solid #999; }
.grid { width: 100%; table-layout: fixed; border-spacing: 0; background: #fff; color: #000; font: 13px/18px Lato, "Noto Sans Arabic", "DejaVu Sans", sans-serif; }
.c0 { width: 26px; } .ca { width: 38px; } .cb { width: 63px; } .cd { width: 221px; } .ce { width: 158px; } .cg { width: 155px; } .ch { width: 24px; }
.grid th { padding: 0; background: #e6e6e6; border-right: 1px solid #aaa; font-weight: 400; }
.grid thead th { height: 20px; border-bottom: 1px solid #999; }
.grid thead th:last-child { border-right: 0; }
.grid thead .cur { background: #d2d2d2; color: #217346; border-bottom: 2px solid #217346; }
.corner svg { margin-left: 10px; }
.grid td { height: 20px; padding: 0 2px; border-right: 1px solid #000; border-bottom: 1px solid #000; overflow: hidden; white-space: nowrap; line-height: 16px; }
.grid tbody th { border-bottom: 1px solid #bbb; vertical-align: bottom; line-height: 17px; }
.grid .h td { height: 23px; }
.grid td:nth-child(2), .grid td:nth-child(3) { text-align: center; border-right-width: 3px; }
.grid td:nth-child(4) { border-right-width: 3px; direction: rtl; text-align: start; }
.grid td:nth-child(5), .grid td:nth-child(7) { direction: rtl; text-align: start; font-weight: 700; font-size: 12px; }
.grid td:nth-child(6) { border-right-width: 3px; padding: 0 6px 0 8px; font-weight: 700; }
.grid td:nth-child(8) { border-right: 3px double #000; padding: 0 6px 0 8px; font-weight: 700; }
.grid td:last-child { border-right: 0; padding: 0 0 0 6px; }
.grid .first td { border-top: 1px solid #000; }
.m { display: flex; justify-content: space-between; }
.gray { background: #d9d9d9; }
.r1 th { height: 37px; } .r2 th { height: 22px; } .grid .r3 th, .grid .r3 td { height: 28px; }
.grid .r4 th, .grid .r4 td { border-bottom-color: #999; }
.grid tr td.dk, .grid tr td.md { color: #fff; text-align: center; padding: 0; font-weight: 600; border-right: 1px solid #000; direction: rtl; }
.grid tr td.dk { background: #1d1b10; }
.grid tr td.md { background: #302c1d; font-size: 16px; }
.grid tr td.k { border-right: 3px solid #000; }
.grid tr td.dbl { border-right: 3px double #000; }
.grid tr td.t0 { font-size: 22px; border-bottom: 3px solid #000; }
.grid tr td.blue { background: #355e92; }
.grid tr td.sky { background: #8db4e2; }
.vert { writing-mode: vertical-rl; transform: rotate(180deg); display: inline-block; font-size: 16px; line-height: 20px; }
.slant { display: inline-block; transform: rotate(-60deg); font-size: 20px; line-height: 24px; }
.grid tr td.bayan { position: relative; font-size: 26px; }
.logo { position: absolute; left: 6px; top: 12px; }
.logo text { font: 600 70px "Open Sans", sans-serif; fill: #fff; direction: ltr; }

.vscroll { flex: none; width: 21px; padding: 3px 2px 0 3px; display: flex; flex-direction: column; }
.vscroll button, .hscroll button, .vscroll .thumb, .hscroll .thumb { flex: none; width: 15px; height: 15px; background: #fff; border: 1px solid #ababab; display: flex; align-items: center; justify-content: center; }
.vscroll .thumb { height: 17px; }
.track { flex: 1; background: #dadada; }
.tri { display: block; width: 0; height: 0; border: 4px solid transparent; }
.up { border-bottom-color: #666; border-top: 0; }
.down { border-top-color: #666; border-bottom: 0; }
.prev { border-right-color: #666; border-left: 0; }
.next { border-left-color: #666; border-right: 0; }
.pale { border-right-color: #bbb; }
.green { border-left-color: #0f6b38; }

.sheets { flex: none; height: 27px; display: flex; align-items: flex-start; font-size: 13px; }
.arrows { width: 101px; height: 20px; margin-top: 2px; border-right: 1px solid #999; display: flex; align-items: center; gap: 25px; padding-left: 27px; }
.st { flex: none; height: 22px; margin: 2px 3px 0 2px; text-align: center; line-height: 20px; color: #fff; overflow: hidden; }
.st.plain { width: 96px; color: #555; margin: 2px 0 0 3px; }
.st.active { width: 66px; margin: 0; height: 24px; background: #fff; color: #217346; font-size: 12px; font-weight: 700; border-bottom: 2px solid #217346; line-height: 24px; }
.navy { width: 91px; background: #17375d; } .purple { width: 73px; background: #7030a0; } .red { width: 61px; background: #a50021; } .brick { width: 54px; background: #953735; } .olive { width: 65px; background: #4f6228; } .plum { width: 55px; background: #403152; } .teal { width: 53px; background: #31869b; }
.more { margin: 0 9px 0 5px; font-weight: 700; font-size: 15px; line-height: 22px; color: #0f6b38; }
.add { margin-top: 5px; }
.sheets .dots { margin: 8px 15px 0 20px; }
.hscroll { flex: 1; display: flex; margin: 6px 21px 0 0; }
.hscroll .thumb { width: 17px; }
.hscroll .track { margin-right: 2px; }

.status { flex: none; height: 22px; display: flex; align-items: center; background: #f3f3f3; border-top: 1px solid #c6c6c6; padding: 0 8px 0 7px; font-size: 11px; }
.ready { margin-right: auto; }
.view { width: 38px; height: 21px; display: flex; align-items: center; justify-content: center; }
.zb { width: 14px; display: flex; justify-content: center; }
.zoom { appearance: none; width: 101px; height: 12px; margin: 0; background: linear-gradient(#aaa, #aaa) center / 100% 1px no-repeat; }
.zoom::-webkit-slider-thumb { appearance: none; width: 5px; height: 11px; background: #666; }
.pct { margin-left: 7px; }

.taskbar { flex: none; position: relative; height: 40px; display: flex; color: #111; background: linear-gradient(90deg, #cbe6e5 0, #cde0de 16%, #d3dfdc 20%, #cdeae3 36%, #dcdccf 46%, #dad9d2 52%, #cedcdc 62%, #d0dede 76%, #d7e8d9 84%, #d5dcda 96%, #d0d8d8); }
.app { width: 48px; margin-right: 1px; display: flex; align-items: center; justify-content: center; background: linear-gradient(#0a78d4, #0a78d4) center bottom / 0 2px no-repeat; }
.app.run { background-size: 40px 2px; }
.app.cur { background-size: 100% 2px; background-color: #eef6f4; }
.tray { margin-left: auto; display: flex; align-items: center; margin-right: 4px; border-right: 1px solid #aab; }
.tray button { width: 24px; display: flex; justify-content: center; }
.tray .lang { width: 36px; }
.clock { width: 64px; display: flex; flex-direction: column; align-items: center; line-height: 18px; font-size: 11px; }
.tray .note { position: relative; width: 49px; }
.note b { position: absolute; left: 24px; top: 5px; width: 17px; height: 17px; border: 1px solid #777; border-radius: 50%; background: #d5dcda; font-size: 11px; line-height: 15px; }
.mark { position: absolute; left: 44%; bottom: 0; display: flex; flex-direction: column; opacity: .22; pointer-events: none; color: #888; }
.mark span { font: 700 27px/44px "Liberation Sans", sans-serif; }
```
